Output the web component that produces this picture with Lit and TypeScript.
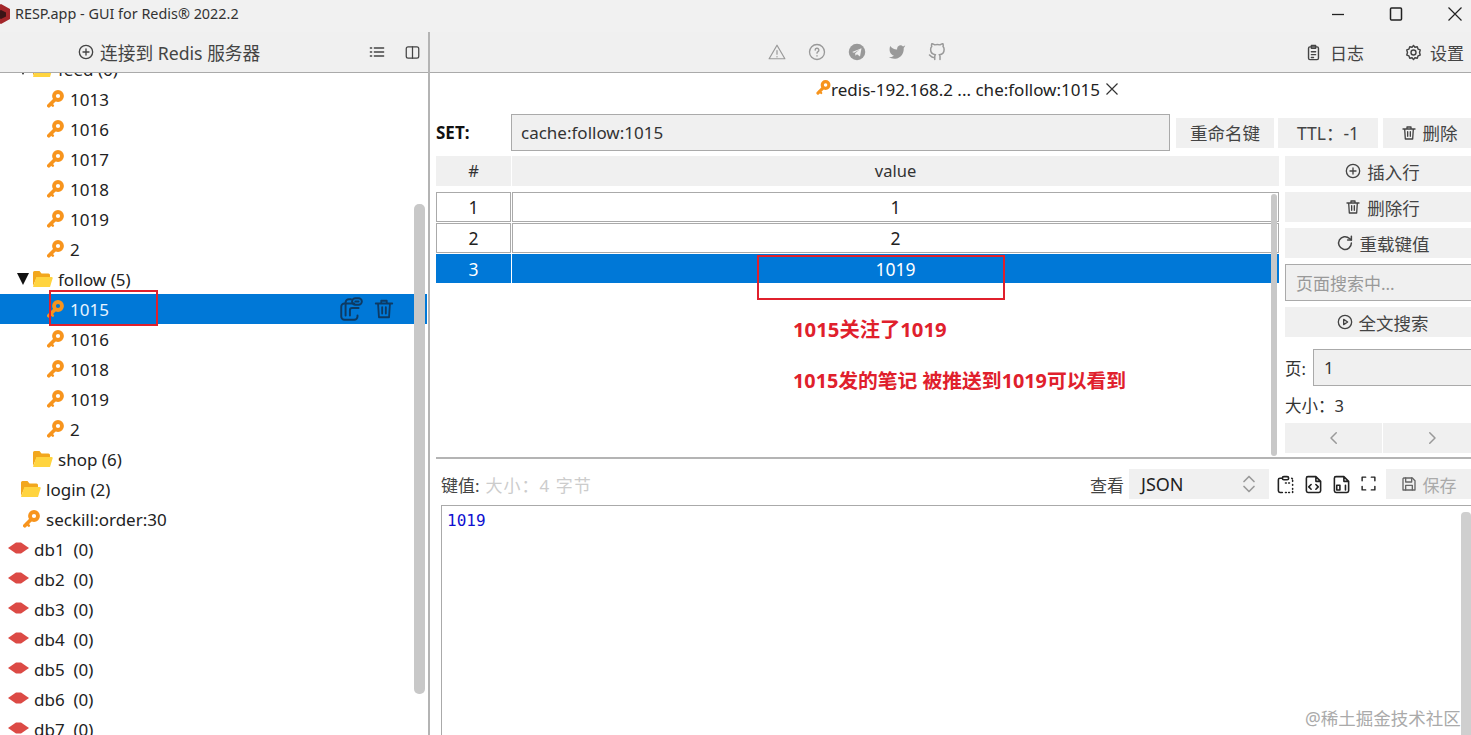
import { LitElement, html, css } from 'lit';
import { customElement } from 'lit/decorators.js';

const stroke = (size: number, body: unknown, color = 'currentColor', sw = 2) => html`<svg width=${size} height=${size} viewBox="0 0 24 24" fill="none" stroke=${color} stroke-width=${sw} stroke-linecap="round" stroke-linejoin="round">${body}</svg>`;

const plusCircle = (s = 16) => stroke(s, html`<svg><circle cx="12" cy="12" r="10"/><path d="M12 7.500v9M7.500 12h9"/></svg>`);
const trash = (s = 16, sw = 2) => stroke(s, html`<svg><path d="M3 6h18M9 6V3h6v3M5.500 6l1 15h11l1-15M10 10v7M14 10v7"/></svg>`, 'currentColor', sw);
const reload = (s = 16) => stroke(s, html`<svg><path d="M20.500 12a8.500 8.500 0 1 1-2.600-6.100L20.500 8"/><path d="M20.500 3v5h-5"/></svg>`);
const playCircle = (s = 16) => stroke(s, html`<svg><circle cx="12" cy="12" r="10"/><path d="M10 8l6 4-6 4z"/></svg>`);
const save = (s = 16) => stroke(s, html`<svg><path d="M4 3h13l4 4v14H3V4z"/><path d="M7 3v6h9V3M7 21v-7h10v7"/></svg>`);

const keyIcon = () => html`<svg class="key" width="17" height="18" viewBox="0 0 17 18">
    <path d="M1.800 15.800 8 9.400" stroke="#f7941d" stroke-width="3.600" stroke-linecap="round"/>
    <path d="M3.800 13.600 5.800 15.600" stroke="#f7941d" stroke-width="2.600" stroke-linecap="round"/>
    <circle cx="11" cy="6" r="4" fill="none" stroke="#f7941d" stroke-width="3.800"/>
  </svg>`;

const folderIcon = () => html`<svg width="21" height="18" viewBox="0 0 21 18">
    <path d="M1 16V2.500Q1 1 2.500 1h5l2 2.500h7Q18 3.500 18 5v2H5z" fill="#f2a71d"/>
    <path d="M1 17 4.400 7h15.200Q21 7 20.600 8.400L18 17z" fill="#ffd43f"/>
  </svg>`;

const dbIcon = () => html`<svg width="21" height="12" viewBox="0 0 21 12">
    <path d="M0 6 8 .5h5L21 6l-8 5.500H8z" fill="#dc4a45"/>
  </svg>`;

type TreeRow = { label: string; kind: 'key' | 'folder' | 'db'; pad: number; arrow?: boolean; selected?: boolean };

const tree: TreeRow[] = [
  { label: 'feed (6)', kind: 'folder', pad: 17, arrow: true },
  { label: '1013', kind: 'key', pad: 47 },
  { label: '1016', kind: 'key', pad: 47 },
  { label: '1017', kind: 'key', pad: 47 },
  { label: '1018', kind: 'key', pad: 47 },
  { label: '1019', kind: 'key', pad: 47 },
  { label: '2', kind: 'key', pad: 47 },
  { label: 'follow (5)', kind: 'folder', pad: 17, arrow: true },
  { label: '1015', kind: 'key', pad: 47, selected: true },
  { label: '1016', kind: 'key', pad: 47 },
  { label: '1018', kind: 'key', pad: 47 },
  { label: '1019', kind: 'key', pad: 47 },
  { label: '2', kind: 'key', pad: 47 },
  { label: 'shop (6)', kind: 'folder', pad: 32 },
  { label: 'login (2)', kind: 'folder', pad: 20 },
  { label: 'seckill:order:30', kind: 'key', pad: 23 },
  { label: 'db1  (0)', kind: 'db', pad: 8 },
  { label: 'db2  (0)', kind: 'db', pad: 8 },
  { label: 'db3  (0)', kind: 'db', pad: 8 },
  { label: 'db4  (0)', kind: 'db', pad: 8 },
  { label: 'db5  (0)', kind: 'db', pad: 8 },
  { label: 'db6  (0)', kind: 'db', pad: 8 },
  { label: 'db7  (0)', kind: 'db', pad: 8 },
];

const values = [
  { n: 1, v: '1' },
  { n: 2, v: '2' },
  { n: 3, v: '1019', selected: true },
];

@customElement('app-root')
export class AppRoot extends LitElement {
  static styles = css`
    :host {
      display: flex;
      flex-direction: column;
      position: relative;
      width: 1471px;
      height: 735px;
      overflow: hidden;
      background: #fff;
      color: #222;
      font-family: "Noto Sans", "Noto Sans CJK SC", sans-serif;
      font-size: 17px;
    }
    svg { display: block; flex: none; }

    .title {
      display: flex;
      align-items: center;
      height: 32px;
      flex: none;
      background: #f1f1f1;
      font-size: 14.400px;
      color: #333;
      padding-bottom: 5px;
      box-sizing: border-box;
    }
    .title .logo { margin-left: -8px; }
    .title .name { margin-left: 5px; flex: 1; }
    .win { display: flex; align-items: center; color: #222; padding-right: 8px; gap: 44px; }

    .main { display: flex; flex: 1; min-height: 0; }
    .left { width: 428px; flex: none; display: flex; flex-direction: column; border-right: 2px solid #b4b4b4; }
    .right { flex: 1; min-width: 0; display: flex; flex-direction: column; }

    .bar {
      height: 40px;
      flex: none;
      display: flex;
      align-items: center;
      background: #f0f0f0;
      border-bottom: 1px solid #aaa;
      color: #444;
    }
    .connect { display: flex; align-items: center; gap: 6px; margin-left: 78px; color: #444; font-size: 17.700px; }
    .left .tools { display: flex; gap: 20px; margin-left: auto; margin-right: 8px; align-items: center; }

    .tree { flex: 1; min-height: 0; overflow: hidden; position: relative; }
    .rows { margin-top: -19px; }
    .row { display: flex; align-items: center; height: 30px; width: 427px; box-sizing: border-box; font-size: 17px; color: #222; }
    .row .label { white-space: pre; }
    .row.selected { background: #0078d7; color: #e8f4ff; }
    .row .arrow { width: 15px; flex: none; }
    .row .arrow i { display: block; width: 0; height: 0; border-left: 6.500px solid transparent; border-right: 6.500px solid transparent; border-top: 12px solid #111; }
    .row .glyph { margin-right: 6px; }
    .row.folder .glyph { margin-right: 5px; }
    .row.db .glyph { margin-right: 5px; margin-top: -3px; }
    .row .actions { margin-left: auto; margin-right: 32px; display: flex; align-items: center; gap: 9px; color: #0d3a63; }
    .scroll-left { position: absolute; left: 414px; top: 131px; width: 11px; height: 490px; border-radius: 5px; background: #c8c8c8; }

    .bar .social { display: flex; gap: 22px; margin-left: 338px; color: #999; }
    .bar .side { display: flex; align-items: center; margin-left: auto; gap: 41px; padding-right: 7px; color: #444; }
    .bar .side span { display: flex; align-items: center; gap: 8px; }

    .tab { height: 32px; flex: none; display: flex; align-items: center; justify-content: center; font-size: 17px; padding-left: 34px; color: #222; }
    .tab .key { width: 15px; height: 15px; margin-top: -3px; }
    .tab .x { margin-left: 5px; }

    .content { padding: 9px 0 0 6px; display: flex; flex-direction: column; height: 352px; box-sizing: border-box; flex: none; overflow: hidden; }
    .set { display: flex; align-items: center; height: 37px; flex: none; margin-bottom: 5px; }
    .set b { width: 75px; flex: none; font-size: 17px; color: #111; }
    .set .keyname { width: 659px; height: 37px; box-sizing: border-box; background: #f0f0f0; border: 1px solid #aaa; padding-left: 9px; display: flex; align-items: center; flex: none; font-size: 17px; color: #333; margin-right: 6px; }
    .btn { display: flex; align-items: center; justify-content: center; gap: 6px; height: 30px; background: #f0f0f0; color: #444; font-size: 17.500px; box-sizing: border-box; flex: none; }
    .set .btn { margin-right: 4px; }
    .w98 { width: 98px; }
    .w100 { width: 100px; }
    .w92 { width: 92px; margin-left: 1px; }

    .table-wrap { display: flex; gap: 6px; flex: 1; min-height: 0; }
    .table { width: 843px; flex: none; position: relative; }
    .thead, .tr { display: grid; grid-template-columns: 75px 767px; gap: 1px; text-align: center; }
    .thead { height: 30px; margin-bottom: 6px; }
    .thead div { background: #f0f0f0; line-height: 30px; font-size: 16.500px; color: #333; }
    .tr { height: 30px; margin-bottom: 1px; }
    .tr div { border: 1px solid #aaa; background: #fff; line-height: 28px; font-size: 17.500px; color: #222; box-sizing: border-box; }
    .tr.selected { margin-top: 1px; height: 29px; }
    .tr.selected div { background: #0078d7; color: #fff; border: none; height: 29px; line-height: 30px; overflow: hidden; }
    .scroll-table { position: absolute; right: 2px; top: 38px; width: 6px; height: 262px; border-radius: 3px; background: #c8c8c8; }

    .side-col { width: 195px; flex: none; display: flex; flex-direction: column; gap: 6px; }
    .side-col .btn { width: 100%; }
    .search { height: 37px; border: 1px solid #aaa; background: #f0f0f0; box-sizing: border-box; padding-left: 10px; display: flex; align-items: center; color: #999; flex: none; font-size: 17px; }
    .page { display: flex; align-items: center; margin-top: 6px; height: 37px; flex: none; color: #333; font-size: 16.500px; }
    .page .lbl { width: 28px; flex: none; }
    .page .field { width: 170px; height: 37px; box-sizing: border-box; flex: none; border: 1px solid #aaa; background: #f0f0f0; display: flex; align-items: center; padding-left: 10px; font-size: 17px; }
    .size { font-size: 16.500px; color: #333; height: 26px; display: flex; align-items: center; }
    .pager { display: flex; gap: 1px; margin-top: -1px; }
    .pager div { flex: 1; height: 30px; background: #f0f0f0; color: #999; display: flex; align-items: center; justify-content: center; }

    .split { height: 2px; flex: none; background: #b4b4b4; margin-left: 6px; }

    .value { flex: 1; min-height: 0; display: flex; flex-direction: column; padding: 10px 0 0 11px; position: relative; }
    .vbar { display: flex; align-items: center; height: 30px; flex: none; margin-bottom: 6px; color: #444; font-size: 17px; }
    .vbar .muted { color: #ccc; margin-left: 6px; font-size: 17px; letter-spacing: 1px; }
    .vbar .look { margin-left: auto; margin-right: 5px; }
    .select { width: 140px; height: 30px; background: #f0f0f0; display: flex; align-items: center; padding-left: 12px; box-sizing: border-box; color: #222; font-size: 18px; justify-content: space-between; padding-right: 10px; flex: none; }
    .vicons { display: flex; gap: 9px; margin-left: 7px; color: #222; }
    .save { width: 85px; height: 30px; margin-left: 9px; background: #f0f0f0; color: #aaa; display: flex; align-items: center; justify-content: center; gap: 6px; flex: none; }
    .save svg { color: #666; }
    .editor { flex: 1; border: 1px solid #aaa; border-right: none; border-bottom: none; padding: 5px; font-family: "DejaVu Sans Mono", monospace; font-size: 16px; color: #1010d0; position: relative; }
    .scroll-editor { position: absolute; right: 0; top: 6px; width: 10px; bottom: 0; background: #cfcfcf; border-radius: 4px 4px 0 0; }

    .mark { position: absolute; border: 2px solid #e0202c; box-sizing: border-box; pointer-events: none; }
    .m1 { left: 49px; top: 290px; width: 109px; height: 36px; }
    .m2 { left: 757px; top: 255px; width: 248px; height: 45px; }
    .note { position: absolute; color: #e0202c; font-weight: 700; font-size: 19.800px; white-space: nowrap; line-height: 24px; }
    .n1 { left: 793px; top: 317px; font-size: 20.300px; }
    .n2 { left: 793px; top: 369px; }
    .wm { position: absolute; left: 1305px; top: 705px; color: #aaa; font-size: 17.500px; white-space: nowrap; }
  `;

  private renderRow(r: TreeRow) {
    const glyph = r.kind === 'key' ? keyIcon() : r.kind === 'folder' ? folderIcon() : dbIcon();
    return html`
      <div class="row ${r.kind} ${r.selected ? 'selected' : ''}" style="padding-left:${r.pad}px">
        ${r.arrow ? html`<span class="arrow"><i></i></span>` : ''}
        <span class="glyph">${glyph}</span>
        <span class="label">${r.label}</span>
        ${r.selected
          ? html`<span class="actions">
              ${stroke(26, html`<svg><path d="M15 7H6a3 3 0 0 0-3 3v9a3 3 0 0 0 3 3h9a3 3 0 0 0 3-3v-1"/><path d="M7 18V6a3 3 0 0 1 3-3h2"/><rect x="13" y="2" width="9" height="6" rx="3"/><path d="M16 5h3M19 11h-6a2 2 0 0 0-2 2v5"/></svg>`, 'currentColor', 1.800)}
              ${trash(22, 2)}
            </span>`
          : ''}
      </div>`;
  }

  render() {
    return html`
      <div class="title">
        <svg class="logo" width="18" height="20" viewBox="0 0 18 20">
          <path d="M9 0 18 5v10L9 20 0 15V5z" fill="#a3262a"/>
          <path d="M9 6l5 2.500v4L9 15l-5-2.500v-4z" fill="#3a1416"/>
        </svg>
        <span class="name">RESP.app - GUI for Redis® 2022.2</span>
        <div class="win">
          <svg width="14" height="14" viewBox="0 0 14 14"><path d="M1 7.500h12" stroke="currentColor" stroke-width="1.300"/></svg>
          <svg width="14" height="14" viewBox="0 0 14 14"><rect x="1.500" y="1" width="11" height="12" rx="1" fill="none" stroke="currentColor" stroke-width="1.500"/></svg>
          <svg width="16" height="16" viewBox="0 0 16 16"><path d="M1.500 1.500l13 13M14.500 1.500l-13 13" stroke="currentColor" stroke-width="1.200"/></svg>
        </div>
      </div>
      <div class="main">
        <div class="left">
          <div class="bar">
            <span class="connect">${plusCircle(16)}<span>连接到 Redis 服务器</span></span>
            <span class="tools">
              ${stroke(16, html`<svg><path d="M8 6h14M8 12h14M8 18h14M2 6h2M2 12h2M2 18h2"/></svg>`)}
              ${stroke(15, html`<svg><rect x="2" y="3" width="20" height="18" rx="3"/><path d="M12 3v18"/></svg>`)}
            </span>
          </div>
          <div class="tree">
            <div class="rows">${tree.map((r) => this.renderRow(r))}</div>
            <div class="scroll-left"></div>
          </div>
        </div>
        <div class="right">
          <div class="bar">
            <span class="social">
              ${stroke(18, html`<svg><path d="M12 3 1.500 21h21z"/><path d="M12 10v5M12 18v.5"/></svg>`, 'currentColor', 1.600)}
              ${stroke(18, html`<svg><circle cx="12" cy="12" r="10"/><path d="M9.500 9.500a2.500 2.500 0 1 1 3.500 2.300c-.7.400-1 .9-1 1.700M12 17v.3"/></svg>`, 'currentColor', 1.800)}
              <svg width="18" height="18" viewBox="0 0 24 24"><circle cx="12" cy="12" r="11" fill="currentColor"/><path d="M5.500 12 18 7l-2 11-4-3-2 2-.5-3.500 6-5-7.500 4.500z" fill="#f0f0f0"/></svg>
              <svg width="18" height="18" viewBox="0 0 24 24"><path fill="currentColor" d="M23 3a10.900 10.900 0 0 1-3 1.530 4.480 4.480 0 0 0-7.860 3v1A10.660 10.660 0 0 1 3 4s-4 9 5 13a11.640 11.640 0 0 1-7 2c9 5 20 0 20-11.500a4.500 4.500 0 0 0-.08-.83A7.720 7.720 0 0 0 23 3z"/></svg>
              ${stroke(18, html`<svg><path d="M9 19c-5 1.500-5-2.500-7-3m14 6v-3.870a3.370 3.370 0 0 0-.94-2.610c3.140-.35 6.440-1.540 6.440-7A5.440 5.440 0 0 0 20 4.770 5.070 5.070 0 0 0 19.910 1S18.730.65 16 2.480a13.380 13.380 0 0 0-7 0C6.270.65 5.090 1 5.090 1A5.070 5.070 0 0 0 5 4.770a5.440 5.440 0 0 0-1.500 3.780c0 5.420 3.300 6.610 6.440 7A3.370 3.370 0 0 0 9 18.130V22"/></svg>`)}
            </span>
            <span class="side">
              <span>${stroke(17, html`<svg><rect x="5" y="4" width="14" height="18" rx="2"/><path d="M9 2h6v4H9zM9 11h6M9 15h6M9 19h3"/></svg>`)}日志</span>
              <span>${stroke(17, html`<svg><circle cx="12" cy="12" r="3.500"/><path d="M12 2l2 2.500 3.300-.6 1.100 3.200 3.100 1.300L20.500 12l1 3.600-3.100 1.300-1.100 3.200L14 19.500 12 22l-2-2.500-3.300.6-1.100-3.200-3.100-1.300L3.500 12l-1-3.600 3.100-1.300 1.100-3.200L10 4.500z"/></svg>`)}设置</span>
            </span>
          </div>
          <div class="tab">
            ${keyIcon()}<span>redis-192.168.2 ... che:follow:1015</span>
            <svg class="x" width="14" height="14" viewBox="0 0 14 14"><path d="M1.500 1.500l11 11M12.500 1.500l-11 11" stroke="#333" stroke-width="1.200"/></svg>
          </div>
          <div class="content">
            <div class="set">
              <b>SET:</b>
              <div class="keyname">cache:follow:1015</div>
              <div class="btn w98">重命名键</div>
              <div class="btn w100">TTL：-1</div>
              <div class="btn w92">${trash(16)}删除</div>
            </div>
            <div class="table-wrap">
              <div class="table">
                <div class="thead"><div>#</div><div>value</div></div>
                ${values.map((r) => html`
                  <div class="tr ${r.selected ? 'selected' : ''}"><div>${r.n}</div><div>${r.v}</div></div>`)}
                <div class="scroll-table"></div>
              </div>
              <div class="side-col">
                <div class="btn">${plusCircle(16)}插入行</div>
                <div class="btn">${trash(16)}删除行</div>
                <div class="btn">${reload(18)}重载键值</div>
                <div class="search">页面搜索中...</div>
                <div class="btn">${playCircle(16)}全文搜索</div>
                <div class="page"><span class="lbl">页:</span><div class="field">1</div></div>
                <div class="size">大小：3</div>
                <div class="pager">
                  <div>${stroke(18, html`<svg><path d="M15 5l-7 7 7 7"/></svg>`)}</div>
                  <div>${stroke(18, html`<svg><path d="M9 5l7 7-7 7"/></svg>`)}</div>
                </div>
              </div>
            </div>
          </div>
          <div class="split"></div>
          <div class="value">
            <div class="vbar">
              键值:<span class="muted">大小：4 字节</span>
              <span class="look">查看</span>
              <div class="select">JSON
                ${stroke(20, html`<svg><path d="M6 9l6-6 6 6M6 15l6 6 6-6"/></svg>`, '#999', 2)}
              </div>
              <div class="vicons">
                ${stroke(19, html`<svg><path d="M8 4H5a2 2 0 0 0-2 2v14a2 2 0 0 0 2 2h3"/><rect x="8" y="2" width="8" height="4" rx="2"/><path d="M12 22h1M16 22h1M21 22v-1M21 18v-2M21 13v-2M21 8V6a2 2 0 0 0-2-2M12 10h1M16 10h1" stroke-dasharray="1 2"/></svg>`)}
                ${stroke(19, html`<svg><path d="M5 2h10l6 6v12a2 2 0 0 1-2 2H5a2 2 0 0 1-2-2V4a2 2 0 0 1 2-2zM15 2v6h6M9 12l-3 3 3 3M15 12l3 3-3 3"/></svg>`)}
                ${stroke(19, html`<svg><path d="M5 2h10l6 6v12a2 2 0 0 1-2 2H5a2 2 0 0 1-2-2V4a2 2 0 0 1 2-2zM15 2v6h6M17 13v6M6 13h4v6H6z"/></svg>`)}
                ${stroke(17, html`<svg><path d="M3 8V3h5M16 3h5v5M21 16v5h-5M8 21H3v-5"/></svg>`)}
              </div>
              <div class="save">${save(16)}保存</div>
            </div>
            <div class="editor">1019<div class="scroll-editor"></div></div>
          </div>
        </div>
      </div>
      <div class="mark m1"></div>
      <div class="mark m2"></div>
      <div class="note n1">1015关注了1019</div>
      <div class="note n2">1015发的笔记 被推送到1019可以看到</div>
      <div class="wm">@稀土掘金技术社区</div>
    `;
  }
}
